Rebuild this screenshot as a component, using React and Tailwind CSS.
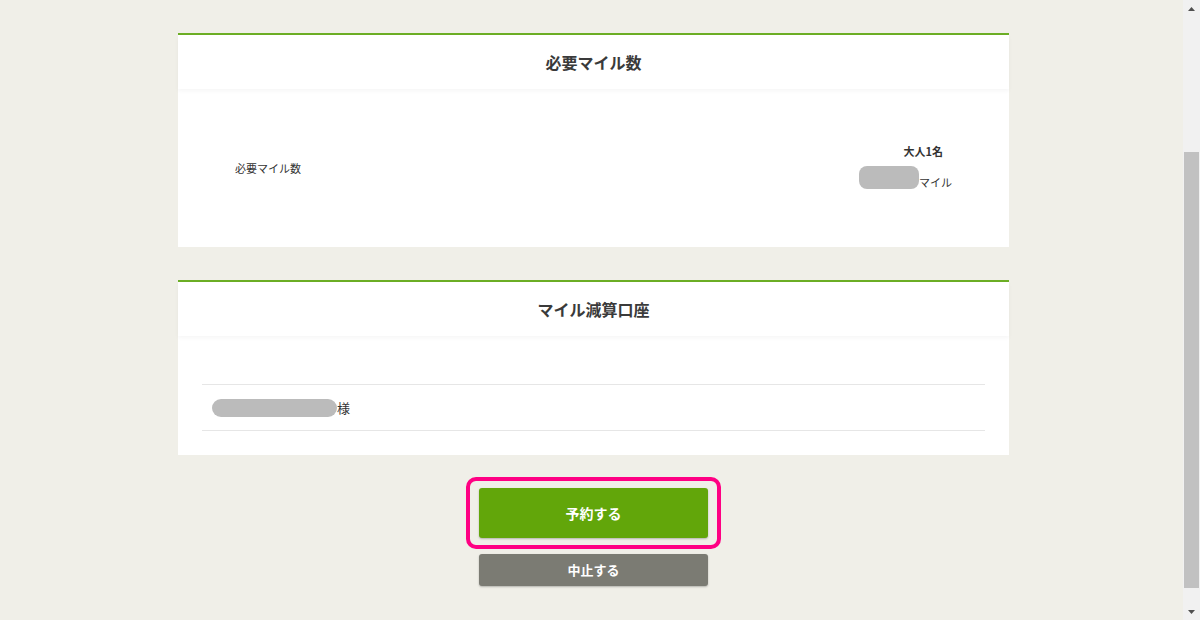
export default function App() {
  const font = { fontFamily: '"Noto Sans CJK JP", "Noto Sans", sans-serif' };
  return (
    <div className="flex h-[620px] w-[1200px] overflow-hidden bg-[#f0efe8] text-[#333]" style={font}>
      <main className="flex flex-1 flex-col items-center pl-[4px] pt-[33px]">
        {/* 必要マイル数 */}
        <section className="w-[831px] border-t-2 border-[#6cae25] bg-white">
          <div className="flex h-[54px] items-center justify-center shadow-[0_2px_4px_rgba(0,0,0,0.04)]">
            <h2 className="text-[16px] font-bold text-[#3a3a3a]">必要マイル数</h2>
          </div>
          <div className="flex h-[158px] items-center justify-between pl-[57px] pr-[57px]">
            <p className="text-[11px] text-[#333]">必要マイル数</p>
            <div className="flex flex-col items-end pb-[4px]">
              <p className="pr-[9px] text-[11px] font-bold">大人1名</p>
              <div className="mt-[6px] flex items-end">
                <span className="h-[23px] w-[60px] rounded-[8px] bg-[#bbbbbb]" />
                <span className="text-[11px] leading-[13px]">マイル</span>
              </div>
            </div>
          </div>
        </section>

        {/* マイル減算口座 */}
        <section className="mt-[33px] w-[831px] border-t-2 border-[#6cae25] bg-white">
          <div className="flex h-[54px] items-center justify-center shadow-[0_2px_4px_rgba(0,0,0,0.04)]">
            <h2 className="text-[16px] font-bold text-[#3a3a3a]">マイル減算口座</h2>
          </div>
          <div className="px-[24px] pb-[24px] pt-[48px]">
            <div className="flex h-[47px] items-center border-y border-[#e6e6e6] pl-[10px]">
              <span className="h-[18px] w-[125px] rounded-[9px] bg-[#bbbbbb]" />
              <span className="text-[13px]">様</span>
            </div>
          </div>
        </section>

        {/* buttons */}
        <div className="mt-[22px] flex flex-col items-center">
          <div className="rounded-[10px] border-[4px] border-[#ff0083] px-[9px] py-[7px]">
            <button className="flex h-[50px] w-[229px] items-center justify-center rounded-[3px] bg-[#62a60a] text-[14px] font-bold text-white shadow-[0_1px_2px_rgba(0,0,0,0.25)]">
              予約する
            </button>
          </div>
          <button className="mt-[5px] flex h-[32px] w-[229px] items-center justify-center rounded-[3px] bg-[#7b7b73] text-[13px] font-bold text-white shadow-[0_1px_2px_rgba(0,0,0,0.25)]">
            中止する
          </button>
        </div>
      </main>

      {/* scrollbar */}
      <div className="flex w-[17px] flex-col bg-[#f1f1f1]">
        <div className="flex h-[17px] items-center justify-center">
          <svg width="7" height="4" viewBox="0 0 7 4"><path d="M0 4 L3.5 0 L7 4 Z" fill="#505050" /></svg>
        </div>
        <div className="mt-[135px] ml-[1px] h-[436px] w-[15px] bg-[#c1c1c1]" />
        <div className="flex-1" />
        <div className="flex h-[17px] items-center justify-center">
          <svg width="7" height="4" viewBox="0 0 7 4"><path d="M0 0 L3.5 4 L7 0 Z" fill="#505050" /></svg>
        </div>
      </div>
    </div>
  );
}
